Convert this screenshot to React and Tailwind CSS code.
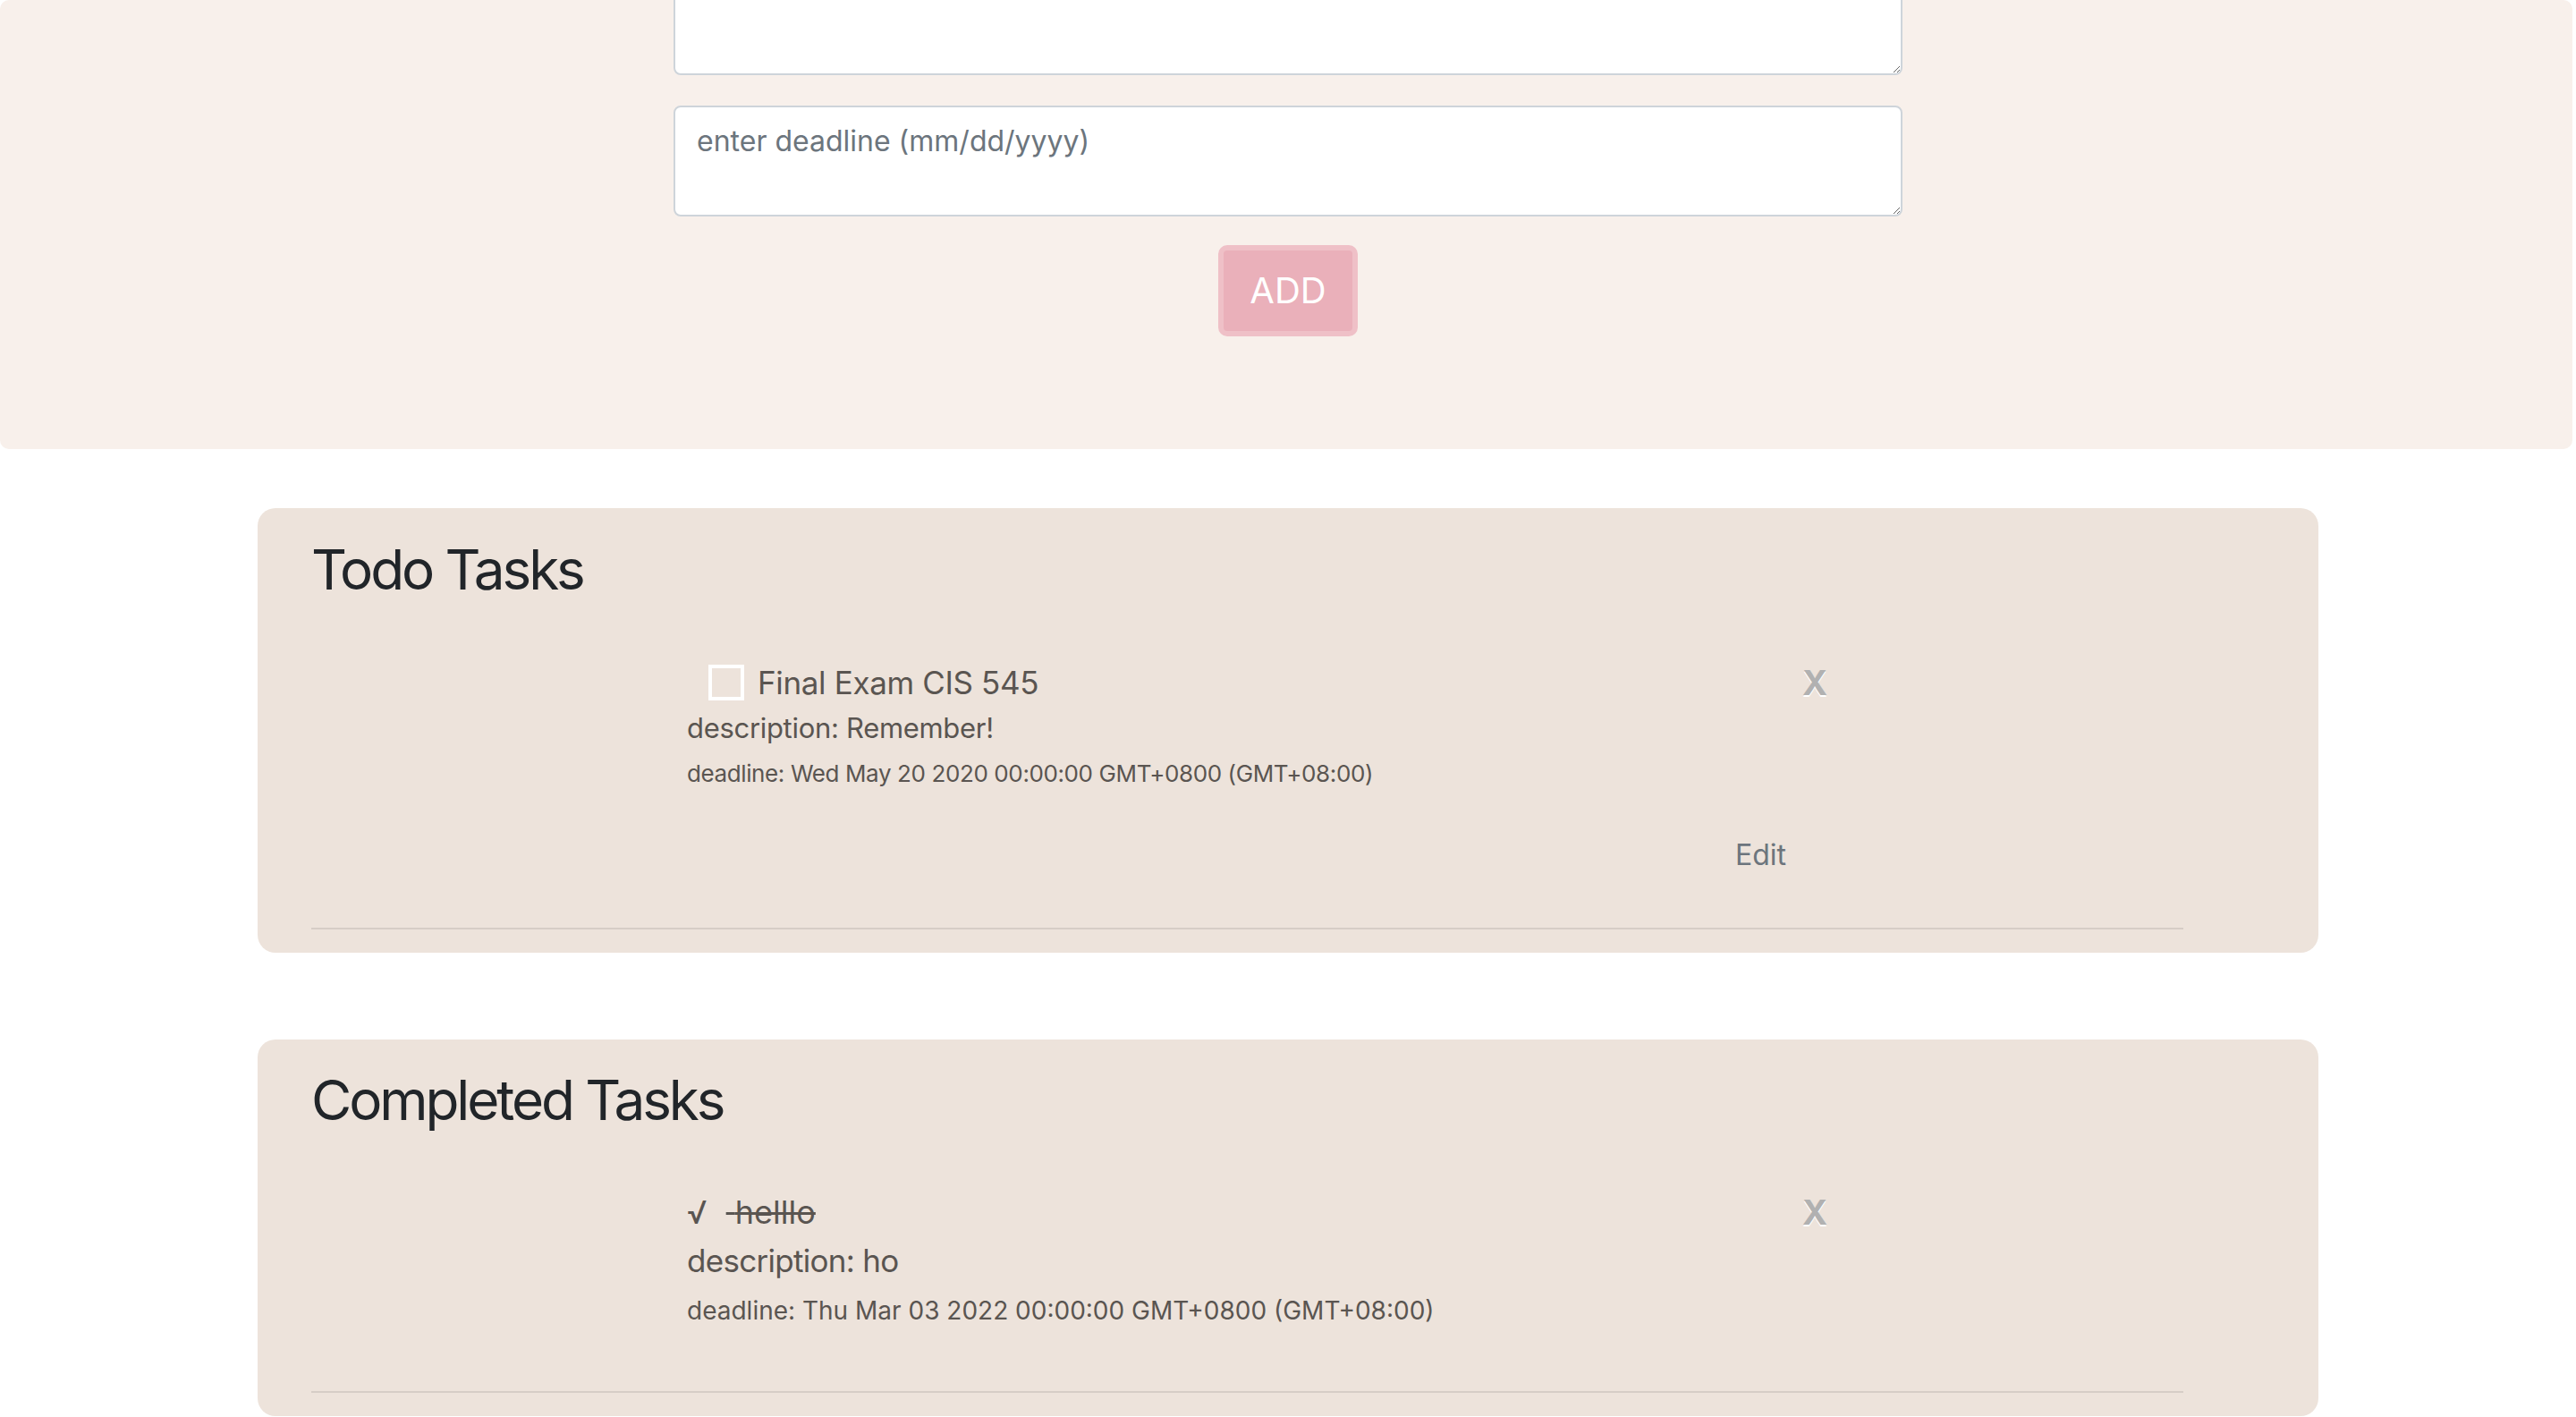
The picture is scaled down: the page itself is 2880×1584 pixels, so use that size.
export default function App() {
  const todo = [
    {
      title: "Final Exam CIS 545",
      description: "Remember!",
      deadline: "Wed May 20 2020 00:00:00 GMT+0800 (GMT+08:00)",
    },
  ];
  const done = [
    {
      title: "helllo",
      description: "ho",
      deadline: "Thu Mar 03 2022 00:00:00 GMT+0800 (GMT+08:00)",
    },
  ];

  return (
    <div className="min-h-screen w-full bg-white font-['Inter','Liberation_Sans',sans-serif] overflow-hidden">
      {/* Formulario */}
      <div className="w-[2876px] rounded-[10px] bg-[#f8f0eb] pl-[4px] pb-[126px] flex flex-col items-center">
        <textarea
          readOnly
          className="-mt-[40px] w-[1374px] h-[124px] rounded-[8px] border-2 border-[#ced4da] bg-white px-[24px] py-[12px] text-[32px] leading-[48px] outline-none"
        />
        <textarea
          readOnly
          placeholder="enter deadline (mm/dd/yyyy)"
          className="mt-[34px] w-[1374px] h-[124px] rounded-[8px] border-2 border-[#ced4da] bg-white px-[24px] pt-[14px] pb-[10px] text-[32px] leading-[48px] text-[#495057] placeholder:text-[#6c757d] outline-none"
        />
        <button className="mt-[32px] w-[156px] h-[102px] rounded-[10px] border-[6px] border-[#efc0c7] bg-[#eab0ba] text-[40px] text-white">
          ADD
        </button>
      </div>

      {/* Todo */}
      <div className="mx-auto mt-[66px] w-[2304px] rounded-[20px] bg-[#ede3db] px-[60px] pt-[31px] pb-[26px]">
        <h2 className="text-[62px] leading-[76px] text-[#212529] tracking-[-0.05em]">Todo Tasks</h2>
        <div className="w-[2093px]">
          {todo.map((t, i) => (
            <div key={i}>
              <div className="pl-[420px] pr-[398px] pt-[61px] text-[#5a5551]">
                <div className="flex h-[54px] items-center justify-between">
                  <div className="flex items-center">
                    <span className="ml-[24px] h-[40px] w-[40px] border-4 border-white" />
                    <span className="ml-[15px] text-[35px] leading-[54px] tracking-[-0.01em]">{t.title}</span>
                  </div>
                  <span className="text-[38px] font-bold leading-none text-[#b1b1b1] [text-shadow:0_2px_0_#fff]">X</span>
                </div>
                <p className="text-[31px] leading-[48px] tracking-[-0.01em]">description: {t.description}</p>
                <p className="mt-[7px] text-[26px] leading-[39px] tracking-[-0.015em]">deadline: {t.deadline}</p>
                <div className="mt-[48px] flex justify-end pr-[46px]">
                  <button className="text-[32px] leading-[48px] text-[#6c757d]">Edit</button>
                </div>
              </div>
              <hr className="mt-[57px] border-t-2 border-[#d6cdc6]" />
            </div>
          ))}
        </div>
      </div>

      {/* Completed */}
      <div className="mx-auto mt-[97px] w-[2304px] rounded-[20px] bg-[#ede3db] px-[60px] pt-[30px] pb-[26px]">
        <h2 className="text-[62px] leading-[76px] text-[#212529] tracking-[-0.05em]">Completed Tasks</h2>
        <div className="w-[2093px]">
          {done.map((t, i) => (
            <div key={i}>
              <div className="pl-[420px] pr-[398px] pt-[60px] text-[#5a5551]">
                <div className="flex h-[54px] items-center justify-between">
                  <div className="text-[36px] leading-[54px]">
                    <span>√</span>
                    <span className="ml-[21px] line-through"> {t.title}</span>
                  </div>
                  <span className="text-[38px] font-bold leading-none text-[#b1b1b1] [text-shadow:0_2px_0_#fff]">X</span>
                </div>
                <p className="text-[35px] leading-[54px] tracking-[-0.02em]">description: {t.description}</p>
                <p className="mt-[8px] text-[28px] leading-[42px]">deadline: {t.deadline}</p>
              </div>
              <hr className="mt-[69px] border-t-2 border-[#d6cdc6]" />
            </div>
          ))}
        </div>
      </div>
    </div>
  );
}
